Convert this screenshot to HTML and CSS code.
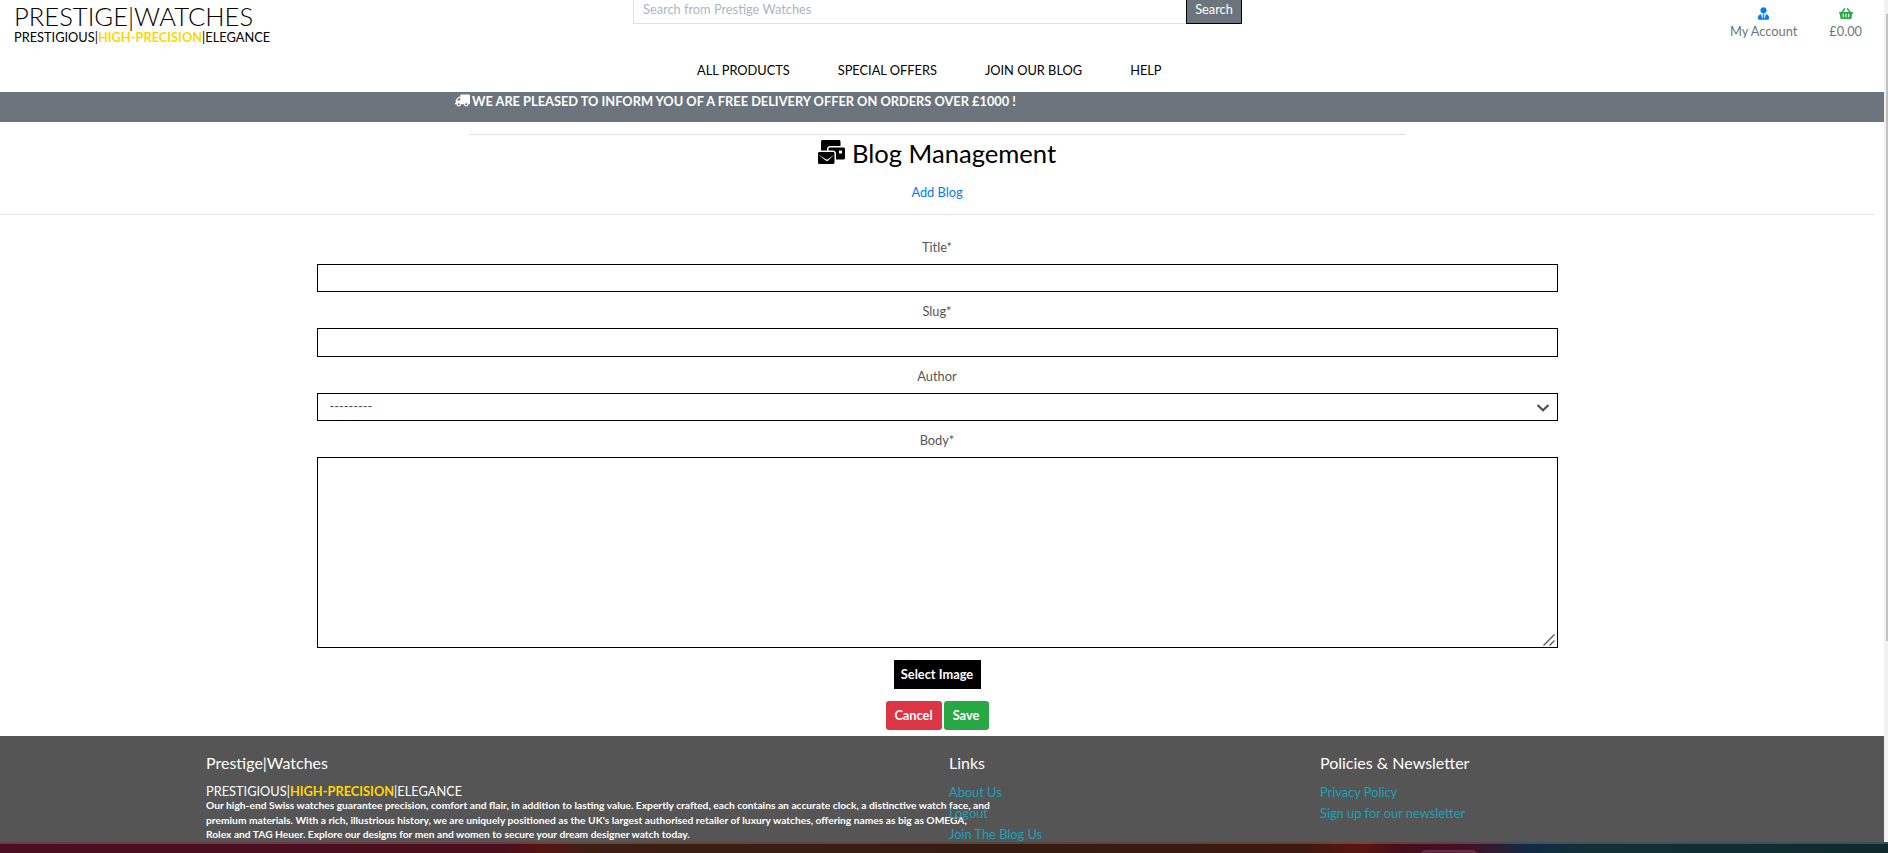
FILE: index.html
```html
<!DOCTYPE html>
<html lang="en">
<head>
<meta charset="utf-8">
<title>Blog Management - Prestige|Watches</title>
<link rel="stylesheet" href="styles.css">
</head>
<body>
<div class="viewport">
  <div class="page">
    <header class="header">
      <div class="brand">
        <h2 class="brand-name"><span>PRESTIGE|WATCHES</span></h2>
        <p class="tagline">PRESTIGIOUS|<strong>HIGH-PRECISION</strong>|ELEGANCE</p>
      </div>
      <form class="search">
        <input class="search-input" type="text" placeholder="Search from Prestige Watches">
        <button class="search-btn" type="button">Search</button>
      </form>
      <div class="account">
        <a class="account-item">
          <svg class="icon-user" viewBox="0 0 448 512" fill="currentColor"><path d="M224 256c70.700 0 128-57.300 128-128S294.700 0 224 0 96 57.300 96 128s57.300 128 128 128zm95.800 32.600L272 480l-32-136 32-56h-96l32 56-32 136-47.800-191.400C56.900 292 0 350.300 0 422.400V464c0 26.500 21.500 48 48 48h352c26.500 0 48-21.500 48-48v-41.600c0-72.100-56.900-130.400-128.200-133.800z"/></svg>
          <span>My Account</span>
        </a>
        <a class="account-item">
          <svg class="icon-basket" viewBox="0 0 576 512" fill="currentColor"><path d="M576 216v16c0 13.255-10.745 24-24 24h-8l-26.113 182.788C514.509 462.435 494.257 480 470.370 480H105.630c-23.887 0-44.139-17.565-47.518-41.212L32 256h-8c-13.255 0-24-10.745-24-24v-16c0-13.255 10.745-24 24-24h67.341l106.780-146.821c10.395-14.292 30.407-17.453 44.701-7.058 14.293 10.395 17.453 30.408 7.058 44.701L170.477 192h235.046L326.120 82.821c-10.395-14.292-7.234-34.306 7.059-44.701 14.291-10.395 34.306-7.235 44.701 7.058L484.659 192H552c13.255 0 24 10.745 24 24zM312 392V280c0-13.255-10.745-24-24-24s-24 10.745-24 24v112c0 13.255 10.745 24 24 24s24-10.745 24-24zm112 0V280c0-13.255-10.745-24-24-24s-24 10.745-24 24v112c0 13.255 10.745 24 24 24s24-10.745 24-24zm-224 0V280c0-13.255-10.745-24-24-24s-24 10.745-24 24v112c0 13.255 10.745 24 24 24s24-10.745 24-24z"/></svg>
          <span>£0.00</span>
        </a>
      </div>
    </header>
    <nav class="nav">
      <a class="nav-products">ALL PRODUCTS</a><a class="nav-offers">SPECIAL OFFERS</a><a class="nav-blog">JOIN OUR BLOG</a><a>HELP</a>
    </nav>
    <div class="banner">
      <svg class="icon-truck" viewBox="0 0 640 512" fill="currentColor"><path d="M272 0h320c26.500 0 48 21.500 48 48v320c0 26.500-21.500 48-48 48h-16c0 53-43 96-96 96s-96-43-96-96H256c0 53-43 96-96 96s-96-43-96-96H24c-13.300 0-24-10.700-24-24v-16c0-13.300 10.700-24 24-24h8V243.900c0-12.700 5.100-24.900 14.100-33.900l99.900-99.900c9-9 21.200-14.100 33.900-14.100H224V48c0-26.500 21.500-48 48-48zM160 464c26.500 0 48-21.500 48-48s-21.500-48-48-48-48 21.500-48 48 21.500 48 48 48zM80 256h144V144h-44.100L80 243.900V256zm400 208c26.500 0 48-21.500 48-48s-21.500-48-48-48-48 21.500-48 48 21.500 48 48 48z"/></svg>
      <strong class="banner-text">WE ARE PLEASED TO INFORM YOU OF A FREE DELIVERY OFFER ON ORDERS OVER £1000 !</strong>
    </div>
    <main class="main">
      <section class="intro">
        <hr class="rule-short">
        <h2 class="title">
          <svg class="icon-mail" viewBox="0 0 576 512" fill="currentColor"><path d="M191.930 448.600c-2.100 0-11.500-.2-20.100-6.900L0 310.900V480c0 17.670 14.330 32 32 32h288c17.670 0 32-14.330 32-32V311l-139.800 130.700c-8.700 6.800-18.100 6.900-20.270 6.900zM192 192c0-35.250 28.750-64 64-64h224V32c0-17.670-14.330-32-32-32H96C78.330 0 64 14.330 64 32v192h128v-32zM320 256H32c-17.670 0-32 14.330-32 32v20.800l172 100c8 7 12 7.200 20 7.200s12-.2 20-7.200l140-100V288c0-17.670-14.330-32-32-32zm224-96H256c-17.670 0-32 14.330-32 32v32h96c35.250 0 64 28.750 64 64v128h160c17.670 0 32-14.330 32-32V192c0-17.670-14.330-32-32-32zm-32 128h-64v-64h64v64z"/></svg>
          <span>Blog Management</span>
        </h2>
        <a class="add-link"><span>Add Blog</span></a>
        <hr class="rule-full">
      </section>
      <form class="form">
        <label class="label">Title*</label>
        <input class="field" type="text">
        <label class="label">Slug*</label>
        <input class="field field-slug" type="text">
        <label class="label label-author">Author</label>
        <div class="field select">
          <span>---------</span>
          <svg class="chevron" viewBox="0 0 12 8" fill="none" stroke="#495057" stroke-width="2"><path d="M.5 1 6 6.300 11.500 1"/></svg>
        </div>
        <label class="label">Body*</label>
        <div class="field body-field">
          <svg class="grip" viewBox="0 0 12 12" fill="none" stroke="#555" stroke-width="1.300"><path d="M.5 11.500 11.500.5M6.500 11.500l5-5"/></svg>
        </div>
        <button class="btn btn-image" type="button">Select Image</button>
        <div class="actions">
          <button class="btn btn-cancel" type="button">Cancel</button>
          <button class="btn btn-save" type="button">Save</button>
        </div>
      </form>
    </main>
    <footer class="footer">
      <div class="about">
        <h5>Prestige|Watches</h5>
        <p class="footer-tagline">PRESTIGIOUS|<strong>HIGH-PRECISION</strong>|ELEGANCE</p>
        <p class="blurb"><span class="b1">Our high-end Swiss watches guarantee precision, comfort and flair, in addition to lasting value. Expertly crafted, each contains an accurate clock, a distinctive watch face, and</span><br><span class="b2">premium materials. With a rich, illustrious history, we are uniquely positioned as the UK's largest authorised retailer of luxury watches, offering names as big as OMEGA,</span><br><span class="b3">Rolex and TAG Heuer. Explore our designs for men and women to secure your dream designer watch today.</span></p>
      </div>
      <div class="links">
        <h5>Links</h5>
        <a>About Us</a><a>Logout</a><a>Join The Blog Us</a>
      </div>
      <div class="policies">
        <h5>Policies &amp; Newsletter</h5>
        <a>Privacy Policy</a><a>Sign up for our newsletter</a>
      </div>
    </footer>
  </div>
  <div class="scrollbar"><div class="thumb"></div></div>
</div>
<div class="taskbar"><div class="task"></div></div>
</body>
</html>
```
FILE: styles.css
```css
* { box-sizing: border-box; }
body {
  margin: 0;
  height: 853px;
  overflow: hidden;
  background: #fff;
  color: #555;
  font: 400 12.8px/19.2px Lato, sans-serif;
}
h2, h5, p, hr { margin: 0; }
button, input { font: inherit; margin: 0; }
svg { display: block; flex: none; }

.viewport { display: flex; height: 842px; }
.page { width: 1884px; height: 842px; overflow: hidden; }
.scrollbar { width: 4px; background: #f1f1f1; padding: 14px 0 0 2px; }
.thumb { height: 627px; background: #c1c1c1; }

.header { display: flex; height: 58px; color: #000; }
.brand { width: 633px; padding: 1px 0 0 14px; white-space: nowrap; }
.brand-name { font-size: 25.6px; line-height: 30px; font-weight: 300; }
.tagline { font-size: 12.8px; line-height: 12px; font-weight: 400; }
.tagline strong { color: #ffd700; font-weight: 700; }
.search { display: flex; width: 609px; height: 29px; margin-top: -5px; }
.search-input {
  width: 553px; padding: 0 9px; border: 1px solid #dee2e6; border-right: 0;
  border-radius: 0; background: #fff; outline: none;
}
.search-input::placeholder { color: #aab7c4; opacity: 1; }
.search-btn {
  width: 56px; padding: 0; color: #fff; background: #6c757d;
  border: 1px solid #000; border-radius: 0;
}
.account { display: flex; flex: 1; justify-content: flex-end; gap: 32px; padding: 7px 22px 0 0; color: #6c757d; }
.account-item { display: flex; flex-direction: column; align-items: center; white-space: nowrap; }
.account-item span { margin-top: 2px; }
.icon-user { width: 11px; height: 13px; color: #007bff; }
.icon-basket { width: 14px; height: 13px; color: #28a745; }

.nav { display: flex; gap: 48px; height: 34px; padding: 3px 0 0 697px; color: #000; white-space: nowrap; }

.banner { display: flex; height: 30px; padding-left: 455px; background: #6c757d; color: #fff; white-space: nowrap; }
.icon-truck { width: 15px; height: 13px; margin-top: 2px; transform: none; }
.banner-text { margin-left: 2px; line-height: 18px; font-weight: 700; }

.main { width: 1874px; height: 614px; }
.intro { display: flex; flex-direction: column; align-items: center; height: 94px; padding-top: 12px; }
.rule-short, .rule-full { height: 1px; border: 0; background: #e3e3e3; }
.rule-short { width: 937px; }
.rule-full { width: 1874px; margin-top: 12px; }
.title { display: flex; gap: 7px; height: 48px; padding-top: 3px; color: #000; font-size: 25.6px; line-height: 31px; font-weight: 400; }
.icon-mail { width: 27px; height: 24px; margin-top: 2px; }
.add-link { color: #007bff; }

.form { display: flex; flex-direction: column; align-items: center; padding-top: 22px; }
.label { height: 26px; }
.field { width: 1241px; height: 28px; margin-bottom: 10px; border: 1px solid #000; border-radius: 0; background: #fff; outline: none; }
.field-slug { height: 29px; }
.select { display: flex; justify-content: space-between; padding: 3px 8px 0 12px; color: #495057; }
.chevron { width: 12px; height: 8px; margin-top: 7px; }
.body-field { display: flex; justify-content: flex-end; align-items: flex-end; height: 191px; margin-bottom: 12px; padding: 1px 2px; }
.grip { width: 12px; height: 12px; }
.btn { height: 29px; padding: 0; border: 0; color: #fff; font-weight: 700; }
.btn-image { width: 87px; background: #000; }
.actions { display: flex; gap: 2px; margin-top: 12px; }
.btn-cancel { width: 56px; border-radius: 3px; background: #dc3545; }
.btn-save { width: 45px; border-radius: 3px; background: #28a745; }

.footer { display: flex; height: 106px; padding: 17px 0 0 206px; background: #555; color: #fff; white-space: nowrap; }
.footer h5 { font-size: 16px; line-height: 20px; font-weight: 400; }
.about { width: 743px; }
.footer-tagline { margin-top: 9px; line-height: 18px; }
.footer-tagline strong { color: #ffd700; }
.blurb { font-size: 10.24px; line-height: 14.5px; font-weight: 700; margin-top: -2px; }
.links { width: 371px; }
.links h5, .policies h5 { margin-bottom: 10px; }
.links a, .policies a { display: block; height: 21px; color: #17a2b8; }

.taskbar {
  height: 11px; padding: 6px 0 0 1420px; border-top: 2px solid rgba(255, 255, 255, .18);
  background: linear-gradient(90deg, #4b0e22 0, #4b0e1c 500px, #551412 545px, #3d1f12 590px, #351c12 1000px, #3e190f 1300px, #5a150f 1360px, #460e1c 1400px, #421126 1470px, #102b43 1530px, #123036 1590px, #0e2a2c 1888px) border-box;
}
.task { width: 58px; height: 12px; border: 2px solid #643044; border-radius: 6px 6px 0 0; background: #572237; }
```
